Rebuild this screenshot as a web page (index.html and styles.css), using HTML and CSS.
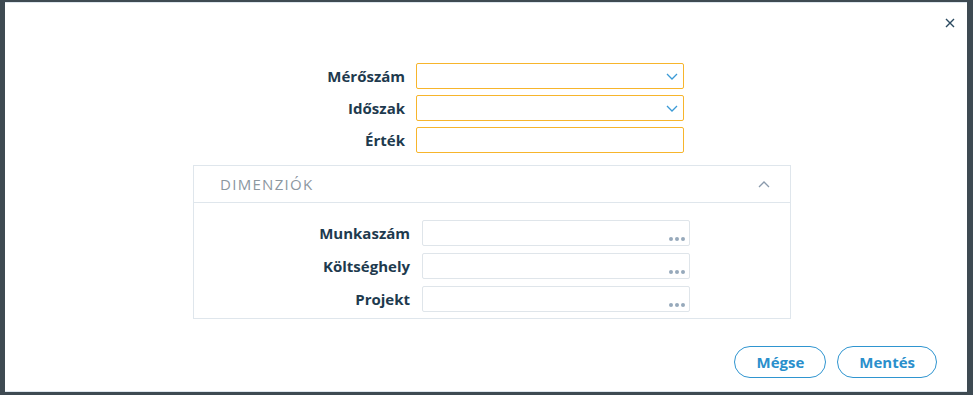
FILE: index.html
```html
<!DOCTYPE html>
<html lang="hu">
<head>
  <meta charset="UTF-8" />
  <meta name="viewport" content="width=device-width, initial-scale=1.0"/>
  <title>Mérőszám</title>
  <link rel="stylesheet" href="styles.css">
</head>
<body>
  <div class="dialog">
    <div class="dialog-head">
      <button class="close" title="Bezárás">
        <svg width="10" height="10" viewBox="0 0 10 10"><path d="M1 1L9 9M9 1L1 9" stroke="#2b4a60" stroke-width="1.4" fill="none"/></svg>
      </button>
    </div>

    <div class="form main-form">
      <label class="lbl">Mérőszám</label>
      <div class="field select">
        <svg class="chev" width="12" height="7" viewBox="0 0 12 7"><path d="M1 1L6 6L11 1" stroke="#3a9ad6" stroke-width="1.3" fill="none"/></svg>
      </div>
      <label class="lbl">Időszak</label>
      <div class="field select">
        <svg class="chev" width="12" height="7" viewBox="0 0 12 7"><path d="M1 1L6 6L11 1" stroke="#3a9ad6" stroke-width="1.3" fill="none"/></svg>
      </div>
      <label class="lbl">Érték</label>
      <div class="field select"></div>
    </div>

    <div class="panel">
      <div class="panel-head">
        <span class="panel-title">DIMENZIÓK</span>
        <svg width="12" height="7" viewBox="0 0 12 7"><path d="M1 6L6 1L11 6" stroke="#8a9aac" stroke-width="1.3" fill="none"/></svg>
      </div>
      <div class="form dim-form">
        <label class="lbl">Munkaszám</label>
        <div class="field lookup"><span class="dots"><i></i><i></i><i></i></span></div>
        <label class="lbl">Költséghely</label>
        <div class="field lookup"><span class="dots"><i></i><i></i><i></i></span></div>
        <label class="lbl">Projekt</label>
        <div class="field lookup"><span class="dots"><i></i><i></i><i></i></span></div>
      </div>
    </div>

    <div class="dialog-foot">
      <button class="btn">Mégse</button>
      <button class="btn">Mentés</button>
    </div>
  </div>
</body>
</html>
```

FILE: styles.css
```css
body {
  font-family: "Open Sans", Arial, sans-serif;
  background-color: #3e4a52;
  margin: 0;
  padding: 2px 6px 0 5px;
}

.dialog {
  background-color: #ffffff;
  height: 390px;
  box-sizing: border-box;
  border-top: 1px solid #dde6ee;
  border-bottom: 1px solid #dde6ee;
}

.dialog-head {
  height: 60px;
  display: flex;
  justify-content: flex-end;
  align-items: flex-start;
}

.close {
  border: none;
  background: none;
  padding: 0;
  margin: 13px 12px 0 0;
  width: 10px;
  height: 10px;
  cursor: pointer;
}

.form {
  display: grid;
  grid-template-columns: 120px 268px;
  align-items: center;
}

.main-form {
  padding-left: 280px;
  column-gap: 11px;
  row-gap: 6px;
}

.lbl {
  text-align: right;
  font-weight: bold;
  font-size: 15px;
  color: #1e3a4e;
}

.field {
  height: 26px;
  box-sizing: border-box;
  border-radius: 2px;
  display: flex;
  align-items: center;
  justify-content: flex-end;
}

.select {
  border: 1px solid #f7b52c;
}

.chev {
  margin-right: 5px;
}

.panel {
  margin: 12px 0 0 188px;
  width: 598px;
  box-sizing: border-box;
  border: 1px solid #dfe6ec;
}

.panel-head {
  height: 36px;
  border-bottom: 1px solid #dfe6ec;
  display: flex;
  align-items: center;
  justify-content: space-between;
  padding: 0 20px 0 26px;
}

.panel-title {
  font-size: 15px;
  letter-spacing: 1.3px;
  color: #8c979f;
}

.dim-form {
  padding: 17px 0 6px 96px;
  column-gap: 12px;
  row-gap: 7px;
}

.lookup {
  border: 1px solid #dfe5ea;
  align-items: flex-end;
}

.dots {
  display: flex;
  gap: 2px;
  margin: 0 4px 4px 0;
}

.dots i {
  width: 4px;
  height: 4px;
  border-radius: 50%;
  background-color: #97a9bb;
}

.dialog-foot {
  display: flex;
  justify-content: flex-end;
  gap: 11px;
  margin-top: 27px;
  padding-right: 30px;
}

.btn {
  height: 32px;
  padding: 0 21px;
  border: 1px solid #2f95d0;
  border-radius: 16px;
  background-color: #ffffff;
  color: #2a8fcc;
  font-family: "Open Sans", Arial, sans-serif;
  font-weight: bold;
  font-size: 15px;
  cursor: pointer;
}

.btn:hover {
  background-color: #eef6fc;
}
```
